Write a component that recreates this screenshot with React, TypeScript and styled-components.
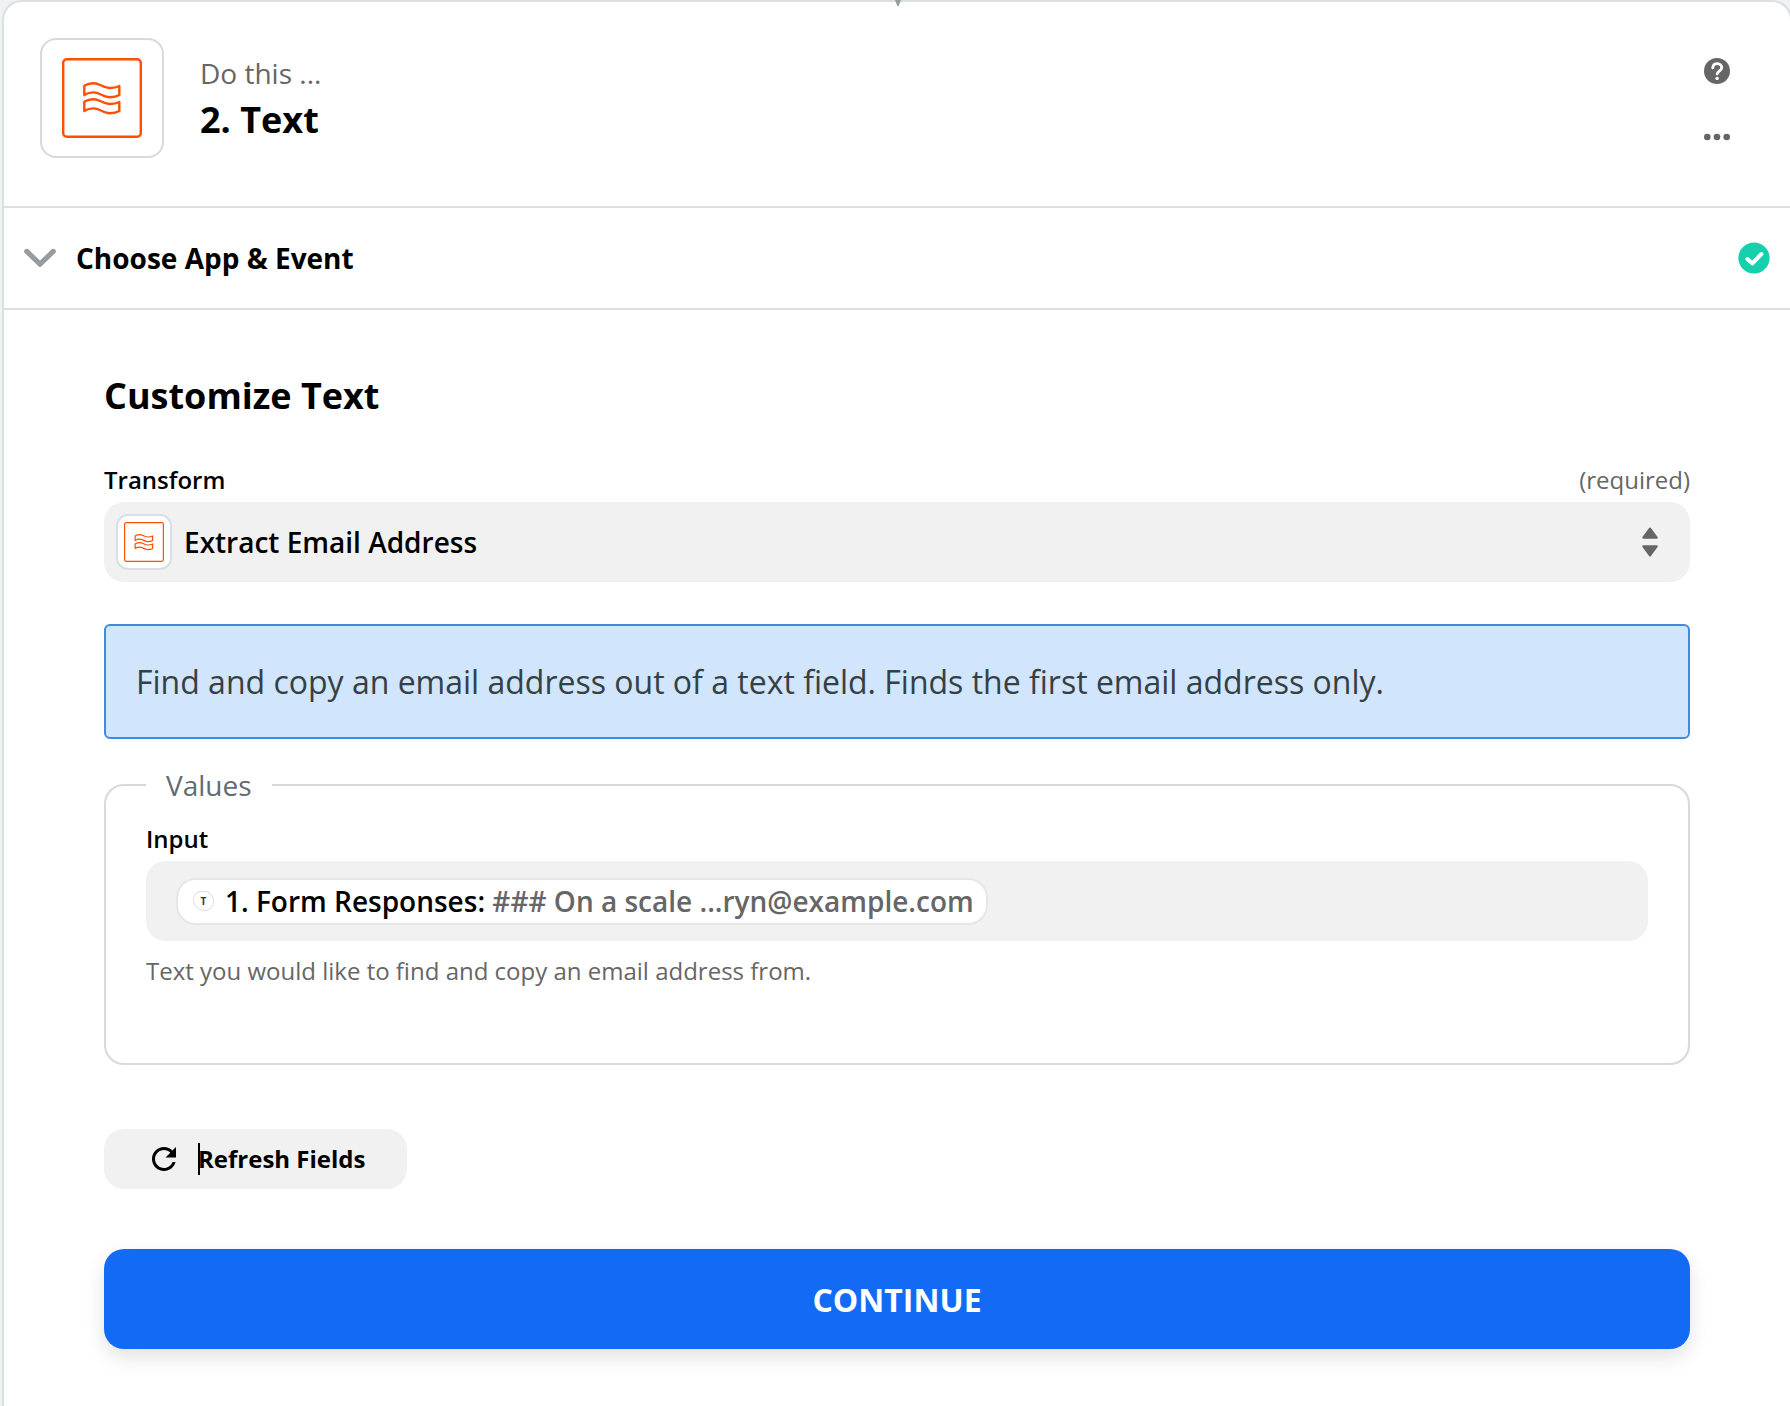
import React, { useState } from "react";
import styled, { createGlobalStyle } from "styled-components";

const GlobalStyle = createGlobalStyle`
  *, *::before, *::after { box-sizing: border-box; }
  body {
    margin: 0;
    background: #eef2f3;
    color: #000;
    font-family: "Open Sans", "Noto Sans", sans-serif;
  }
  button, select, input { font-family: inherit; color: inherit; }
`;

const Page = styled.main`
  overflow: hidden;
`;

const StepCard = styled.article`
  position: relative;
  min-height: 100vh;
  margin: 0 -2px 0 2px;
  background: #fff;
  border: 2px solid #d9dfe2;
  border-bottom: 0;
  border-radius: 20px 20px 0 0;
`;

const ConnectorTip = styled.svg`
  position: absolute;
  top: -2px;
  left: 50%;
  width: 8px;
  height: 6px;
  margin-left: -3px;
`;

const Header = styled.header`
  display: flex;
  align-items: flex-start;
  gap: 36px;
  padding: 36px 60px 48px 36px;
  border-bottom: 2px solid #d9dfe2;
`;

const AppTile = styled.div`
  display: grid;
  place-items: center;
  width: 124px;
  height: 120px;
  border: 2px solid #d9d9d9;
  border-radius: 16px;
`;

const Titles = styled.div`
  display: flex;
  flex-direction: column;
  flex: 1;
  gap: 2px;
  padding-top: 16px;
`;

const Kicker = styled.p`
  margin: 0;
  font-size: 28px;
  line-height: 38px;
  color: #666;
`;

const Heading = styled.h2`
  margin: 0;
  font-size: 36px;
  line-height: 52px;
  font-weight: 700;
`;

const HeaderActions = styled.div`
  display: flex;
  flex-direction: column;
  gap: 40px;
  padding-top: 20px;
`;

const IconButton = styled.button`
  display: block;
  width: 26px;
  height: 26px;
  padding: 0;
  border: 0;
  background: none;
  cursor: pointer;
  svg { display: block; }
`;

const SectionToggle = styled.button`
  display: flex;
  align-items: center;
  gap: 20px;
  width: 100%;
  height: 102px;
  padding: 0 20px;
  border: 0;
  border-bottom: 2px solid #d9dfe2;
  background: none;
  text-align: left;
  font-size: 28px;
  line-height: 38px;
  font-weight: 700;
  cursor: pointer;
`;

const ToggleTitle = styled.span`
  flex: 1;
`;

const Form = styled.form`
  display: flex;
  flex-direction: column;
  padding: 60px 100px 56px;
`;

const LabelRow = styled.div`
  display: flex;
  justify-content: space-between;
  margin-bottom: 6px;
  font-size: 24px;
  line-height: 32px;
`;

const Label = styled.label`
  font-weight: 600;
`;

const Note = styled.span`
  font-size: 24px;
  line-height: 32px;
  color: #666;
`;

const TransformField = styled.div`
  margin: 42px 0;
`;

const SelectShell = styled.div`
  display: grid;
  grid-template-columns: 56px 1fr 16px;
  align-items: center;
  height: 80px;
  padding: 0 32px 0 12px;
  border-radius: 20px;
  background: #f1f1f1;
  > * { grid-row: 1; }
`;

const SmallTile = styled.span`
  grid-column: 1;
  display: grid;
  place-items: center;
  width: 56px;
  height: 56px;
  border: 2px solid #d9dfe2;
  border-radius: 12px;
  background: #fff;
`;

const Select = styled.select`
  grid-column: 2;
  height: 80px;
  padding: 0 12px;
  border: 0;
  background: transparent;
  font-size: 28px;
  font-weight: 600;
  appearance: none;
  outline: none;
`;

const Info = styled.p`
  margin: 0 0 27px;
  padding: 34px 30px;
  border: 2px solid #3e8bdf;
  border-radius: 6px;
  background: #d1e5fd;
  font-size: 32px;
  line-height: 43px;
  color: #354044;
`;

const Values = styled.fieldset`
  min-width: 0;
  margin: 0 0 64px;
  padding: 19px 40px 76px;
  border: 2px solid #d9d9d9;
  border-radius: 20px;
`;

const Legend = styled.legend`
  padding: 0 20px;
  font-size: 28px;
  line-height: 38px;
  color: #5f6d73;
`;

const TokenField = styled.div`
  display: flex;
  align-items: center;
  gap: 12px;
  height: 80px;
  margin-bottom: 14px;
  padding: 0 30px;
  border-radius: 20px;
  background: #f1f1f1;
`;

const Token = styled.span`
  display: flex;
  align-items: center;
  height: 47px;
  padding: 0 12px 0 15px;
  border: 2px solid #e6e6e6;
  border-radius: 20px;
  background: #fff;
  font-size: 28px;
  line-height: 38px;
  font-weight: 600;
  white-space: pre;
`;

const TokenBadge = styled.span`
  display: grid;
  place-items: center;
  width: 21px;
  height: 20px;
  margin-right: 11px;
  border: 1px solid #dcdcdc;
  border-radius: 8px 10px 10px 12px;
  font-size: 10px;
  line-height: 14px;
  font-weight: 700;
  color: #333;
`;

const TokenSample = styled.span`
  color: #666;
`;

const TokenInput = styled.input`
  flex: 1;
  min-width: 0;
  height: 48px;
  padding: 0;
  border: 0;
  outline: none;
  background: transparent;
  font-size: 28px;
`;

const RefreshButton = styled.button`
  display: flex;
  align-items: center;
  align-self: flex-start;
  gap: 16px;
  height: 60px;
  margin-bottom: 60px;
  padding: 0 42px;
  border: 0;
  border-radius: 20px;
  background: #f1f1f1;
  font-size: 24px;
  line-height: 32px;
  font-weight: 700;
  cursor: pointer;
`;

const CaretText = styled.span`
  position: relative;
  &::before {
    content: "";
    position: absolute;
    top: 0;
    left: 0;
    width: 2px;
    height: 32px;
    background: #000;
  }
`;

const ContinueButton = styled.button`
  height: 100px;
  padding: 2px 0 0;
  border: 0;
  border-radius: 20px;
  background: #136bf5;
  color: #fff;
  font-size: 32px;
  line-height: 44px;
  font-weight: 700;
  text-transform: uppercase;
  box-shadow: 0 8px 20px rgba(0, 0, 0, 0.12);
  cursor: pointer;
`;

const WAVE =
  "M22.3 27.8C25 26 28 25.2 31.5 25.2C37 25.2 42 30 48 30C52 30 55 29.2 57.3 28V37C55 38.4 52 39.2 48 39.2C42 39.2 37 34.4 31.5 34.4C28 34.4 25 35.2 22.3 37Z";

function FormatterLogo({ size }: { size: number }) {
  return (
    <svg width={size} height={size} viewBox="0 0 80 80" fill="none" stroke="#ff4f00" strokeWidth="2.4" aria-hidden="true">
      <rect x="1.2" y="1.2" width="77.6" height="77.6" rx="3.6" />
      <path d={WAVE} strokeLinejoin="round" />
      <path d={WAVE} strokeLinejoin="round" transform="translate(0 16)" />
    </svg>
  );
}

function HelpIcon() {
  return (
    <svg width="26" height="26" viewBox="0 0 26 26" fill="none" aria-hidden="true">
      <circle cx="13" cy="13" r="13" fill="#666" />
      <path d="M8.7 9.8C9 7.2 10.8 5.6 13.2 5.6C15.8 5.6 17.7 7.3 17.7 9.7C17.7 12.6 13.8 13 13.1 16" stroke="#fff" strokeWidth="2.8" strokeLinecap="round" />
      <circle cx="13.1" cy="20.4" r="1.7" fill="#fff" />
    </svg>
  );
}

function MoreIcon() {
  return (
    <svg width="26" height="26" viewBox="0 0 26 26" fill="#666" aria-hidden="true">
      <circle cx="3.3" cy="13" r="3.3" />
      <circle cx="13" cy="13" r="3.3" />
      <circle cx="22.7" cy="13" r="3.3" />
    </svg>
  );
}

function ChevronIcon() {
  return (
    <svg width="32" height="20" viewBox="0 0 32 20" fill="none" aria-hidden="true">
      <path d="M2.8 3.4L16 16.2L29.2 3.4" stroke="#959da1" strokeWidth="5.2" strokeLinecap="round" strokeLinejoin="round" />
    </svg>
  );
}

function DoneIcon() {
  return (
    <svg width="32" height="32" viewBox="0 0 32 32" fill="none" aria-hidden="true">
      <circle cx="16" cy="16" r="15.6" fill="#15d0ac" />
      <path d="M9.4 17L14.4 21.4L23.4 12" stroke="#fff" strokeWidth="4" strokeLinecap="round" strokeLinejoin="round" />
    </svg>
  );
}

function SortIcon() {
  return (
    <svg width="16" height="30" viewBox="0 0 16 30" fill="#666" stroke="#666" strokeWidth="2.4" strokeLinejoin="round" aria-hidden="true">
      <path d="M8 1.8L14.6 10.6H1.4Z" />
      <path d="M8 28.2L14.6 19.4H1.4Z" />
    </svg>
  );
}

function RefreshIcon() {
  return (
    <svg width="36" height="36" viewBox="0 0 24 24" aria-hidden="true">
      <path d="M17.65 6.35C16.2 4.9 14.21 4 12 4c-4.42 0-7.99 3.58-7.99 8s3.57 8 7.99 8c3.73 0 6.84-2.55 7.73-6h-2.08c-.82 2.33-3.04 4-5.65 4-3.31 0-6-2.69-6-6s2.69-6 6-6c1.66 0 3.14.69 4.22 1.78L13 11h7V4l-2.35 2.35z" />
    </svg>
  );
}

export default function App() {
  const [extra, setExtra] = useState("");

  return (
    <Page>
      <GlobalStyle />
      <StepCard>
        <ConnectorTip viewBox="0 0 8 6" aria-hidden="true">
          <path d="M1 0H7L4.6 6H3.4Z" fill="#959da1" />
        </ConnectorTip>

        <Header>
          <AppTile>
            <FormatterLogo size={80} />
          </AppTile>
          <Titles>
            <Kicker>Do this ...</Kicker>
            <Heading>2. Text</Heading>
          </Titles>
          <HeaderActions>
            <IconButton type="button" aria-label="Help">
              <HelpIcon />
            </IconButton>
            <IconButton type="button" aria-label="More options">
              <MoreIcon />
            </IconButton>
          </HeaderActions>
        </Header>

        <SectionToggle type="button" aria-expanded={false}>
          <ChevronIcon />
          <ToggleTitle>Choose App &amp; Event</ToggleTitle>
          <DoneIcon />
        </SectionToggle>

        <Form onSubmit={(e) => e.preventDefault()}>
          <Heading>Customize Text</Heading>

          <TransformField>
            <LabelRow>
              <Label htmlFor="transform">Transform</Label>
              <Note>(required)</Note>
            </LabelRow>
            <SelectShell>
              <SmallTile>
                <FormatterLogo size={40} />
              </SmallTile>
              <Select id="transform" required>
                <option>Extract Email Address</option>
              </Select>
              <SortIcon />
            </SelectShell>
          </TransformField>

          <Info>Find and copy an email address out of a text field. Finds the first email address only.</Info>

          <Values>
            <Legend>Values</Legend>
            <LabelRow>
              <Label htmlFor="input-value">Input</Label>
            </LabelRow>
            <TokenField>
              <Token>
                <TokenBadge>T</TokenBadge>
                <span>1. Form Responses: </span>
                <TokenSample>### On a scale ...ryn@example.com</TokenSample>
              </Token>
              <TokenInput id="input-value" type="text" value={extra} onChange={(e) => setExtra(e.target.value)} />
            </TokenField>
            <Note>Text you would like to find and copy an email address from.</Note>
          </Values>

          <RefreshButton type="button">
            <RefreshIcon />
            <CaretText>Refresh Fields</CaretText>
          </RefreshButton>

          <ContinueButton type="submit">Continue</ContinueButton>
        </Form>
      </StepCard>
    </Page>
  );
}
